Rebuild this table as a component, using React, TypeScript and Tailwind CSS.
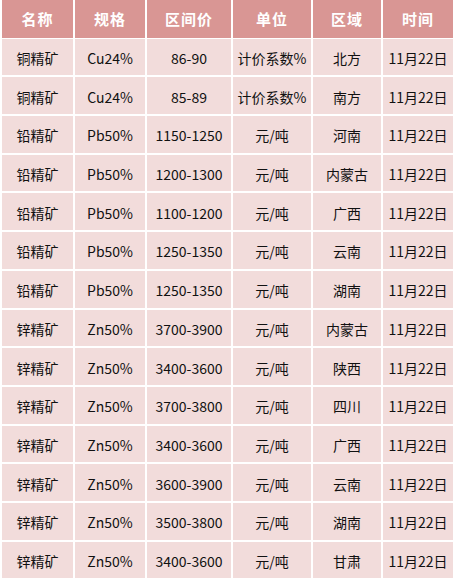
const headers = ['名称', '规格', '区间价', '单位', '区域', '时间'];

const rows: string[][] = [
  ['铜精矿', 'Cu24%', '86-90', '计价系数%', '北方', '11月22日'],
  ['铜精矿', 'Cu24%', '85-89', '计价系数%', '南方', '11月22日'],
  ['铅精矿', 'Pb50%', '1150-1250', '元/吨', '河南', '11月22日'],
  ['铅精矿', 'Pb50%', '1200-1300', '元/吨', '内蒙古', '11月22日'],
  ['铅精矿', 'Pb50%', '1100-1200', '元/吨', '广西', '11月22日'],
  ['铅精矿', 'Pb50%', '1250-1350', '元/吨', '云南', '11月22日'],
  ['铅精矿', 'Pb50%', '1250-1350', '元/吨', '湖南', '11月22日'],
  ['锌精矿', 'Zn50%', '3700-3900', '元/吨', '内蒙古', '11月22日'],
  ['锌精矿', 'Zn50%', '3400-3600', '元/吨', '陕西', '11月22日'],
  ['锌精矿', 'Zn50%', '3700-3800', '元/吨', '四川', '11月22日'],
  ['锌精矿', 'Zn50%', '3400-3600', '元/吨', '广西', '11月22日'],
  ['锌精矿', 'Zn50%', '3600-3900', '元/吨', '云南', '11月22日'],
  ['锌精矿', 'Zn50%', '3500-3800', '元/吨', '湖南', '11月22日'],
  ['锌精矿', 'Zn50%', '3400-3600', '元/吨', '甘肃', '11月22日'],
];

export default function App() {
  return (
    <div className="w-[453px] h-[578px] overflow-hidden bg-white pl-[2px] font-['Noto_Sans_CJK_SC',sans-serif]">
      <div className="grid grid-cols-[71px_70px_84px_78px_68px_70px] auto-rows-[36.7px] gap-[2px]">
        {headers.map(h => (
          <div
            key={h}
            className="h-[38px] bg-[#d99694] text-white font-bold text-[15px] tracking-[1px] flex items-center justify-center pt-[1px]"
          >
            {h}
          </div>
        ))}
        {rows.map((row, i) =>
          row.map((cell, j) => (
            <div
              key={`${i}-${j}`}
              className="bg-[#f2dcdb] text-[#111] text-[14px] flex items-center justify-center whitespace-nowrap pt-[3px]"
            >
              {cell}
            </div>
          ))
        )}
      </div>
    </div>
  );
}
